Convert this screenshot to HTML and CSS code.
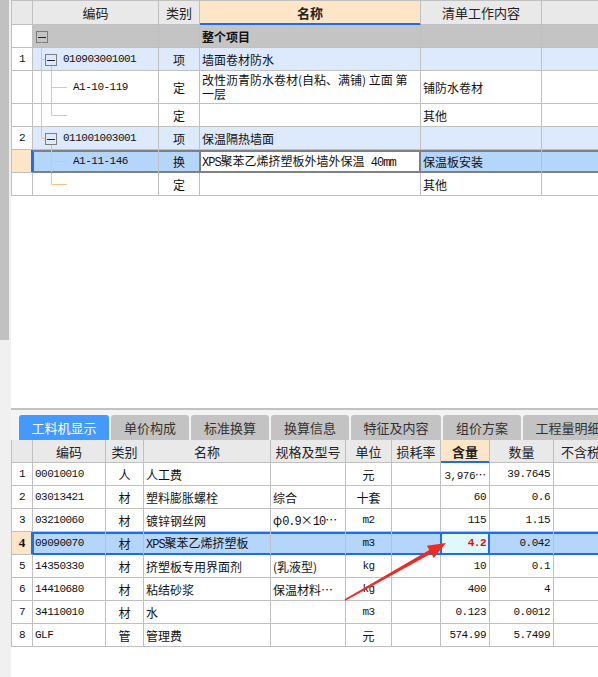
FILE: index.html
```html
<!DOCTYPE html>
<html lang="zh-CN">
<head>
<meta charset="utf-8">
<title>工料机显示</title>
<link rel="stylesheet" href="styles.css">
</head>
<body>
<div class="app">
  <div class="side"><div class="thumb"></div></div>
  <div class="main">
    <div class="top-pane">
      <div class="grid g-top">
        <div class="row head">
          <div class="c w-rn"></div>
          <div class="c w-code">编码</div>
          <div class="c w-type">类别</div>
          <div class="c w-name hl"><b>名称</b></div>
          <div class="c w-list">清单工作内容</div>
          <div class="c w-ext"></div>
        </div>
        <div class="row gray">
          <div class="c w-rn"></div>
          <div class="c w-code tc"><svg class="tree" width="40" height="22"><rect class="bx" x="3.5" y="6.5" width="11" height="11"/><path class="mn" d="M5 12.5H13"/><path class="ln" d="M8.5 17.5V23"/></svg></div>
          <div class="c w-type"></div>
          <div class="c w-name"><b>整个项目</b></div>
          <div class="c w-list"></div>
          <div class="c w-ext"></div>
        </div>
        <div class="row blue">
          <div class="c w-rn n ctr">1</div>
          <div class="c w-code tc"><svg class="tree" width="30" height="22"><path class="ln" d="M8.5 0V23M8.5 11.5H12M18.5 17.5V23"/><rect class="bx" x="12.5" y="6.5" width="11" height="11"/><path class="mn" d="M14 12.5H22"/></svg><span class="n">010903001001</span></div>
          <div class="c w-type ctr">项</div>
          <div class="c w-name">墙面卷材防水</div>
          <div class="c w-list"></div>
          <div class="c w-ext"></div>
        </div>
        <div class="row tall">
          <div class="c w-rn"></div>
          <div class="c w-code tc"><svg class="tree" width="40" height="32"><path class="ln" d="M8.5 0V33M18.5 0V33M18.5 16.5H34"/></svg><span class="n">A1-10-119</span></div>
          <div class="c w-type ctr">定</div>
          <div class="c w-name two"><span>改性沥青防水卷材(自粘、满铺) 立面 第<br>一层</span></div>
          <div class="c w-list">铺防水卷材</div>
          <div class="c w-ext"></div>
        </div>
        <div class="row">
          <div class="c w-rn"></div>
          <div class="c w-code tc"><svg class="tree" width="40" height="22"><path class="ln" d="M8.5 0V23M18.5 0V11.5H34"/></svg></div>
          <div class="c w-type ctr">定</div>
          <div class="c w-name"></div>
          <div class="c w-list">其他</div>
          <div class="c w-ext"></div>
        </div>
        <div class="row blue">
          <div class="c w-rn n ctr">2</div>
          <div class="c w-code tc"><svg class="tree" width="30" height="22"><path class="ln" d="M8.5 0V11.5H12M18.5 17.5V23"/><rect class="bx" x="12.5" y="6.5" width="11" height="11"/><path class="mn" d="M14 12.5H22"/></svg><span class="n">011001003001</span></div>
          <div class="c w-type ctr">项</div>
          <div class="c w-name">保温隔热墙面</div>
          <div class="c w-list"></div>
          <div class="c w-ext"></div>
        </div>
        <div class="row sel">
          <div class="c w-rn"></div>
          <div class="c w-code tc"><svg class="tree" width="40" height="22"><path class="ln" d="M18.5 0V23M18.5 11.5H34"/></svg><span class="n">A1-11-146</span></div>
          <div class="c w-type ctr">换</div>
          <div class="c w-name edit"><span><span class="ni">XPS</span>聚苯乙烯挤塑板外墙外保温<span class="ni"> 40mm</span></span></div>
          <div class="c w-list">保温板安装</div>
          <div class="c w-ext"></div>
        </div>
        <div class="row">
          <div class="c w-rn"></div>
          <div class="c w-code tc"><svg class="tree" width="40" height="22"><path class="ln" d="M18.5 0V11.5H34"/></svg></div>
          <div class="c w-type ctr">定</div>
          <div class="c w-name"></div>
          <div class="c w-list">其他</div>
          <div class="c w-ext"></div>
        </div>
      </div>
    </div>
    <div class="splitter"></div>
    <div class="bottom-pane">
      <div class="tabs">
        <div class="tab wide active">工料机显示</div>
        <div class="tab">单价构成</div>
        <div class="tab">标准换算</div>
        <div class="tab">换算信息</div>
        <div class="tab wide">特征及内容</div>
        <div class="tab">组价方案</div>
        <div class="tab wide">工程量明细</div>
      </div>
      <div class="grid g-bot">
        <div class="row head">
          <div class="c w-rn"></div>
          <div class="c w-bcode">编码</div>
          <div class="c w-btype">类别</div>
          <div class="c w-bname">名称</div>
          <div class="c w-spec">规格及型号</div>
          <div class="c w-unit">单位</div>
          <div class="c w-loss">损耗率</div>
          <div class="c w-qty hl"><b>含量</b></div>
          <div class="c w-amt">数量</div>
          <div class="c w-bext">不含税单价</div>
        </div>
        <div class="row">
          <div class="c w-rn n ctr">1</div>
          <div class="c w-bcode n">00010010</div>
          <div class="c w-btype ctr">人</div>
          <div class="c w-bname">人工费</div>
          <div class="c w-spec"></div>
          <div class="c w-unit ctr">元</div>
          <div class="c w-loss"></div>
          <div class="c w-qty n r"><span>3,976<span class="el">⋯</span></span></div>
          <div class="c w-amt n r">39.7645</div>
          <div class="c w-bext"></div>
        </div>
        <div class="row">
          <div class="c w-rn n ctr">2</div>
          <div class="c w-bcode n">03013421</div>
          <div class="c w-btype ctr">材</div>
          <div class="c w-bname">塑料膨胀螺栓</div>
          <div class="c w-spec">综合</div>
          <div class="c w-unit ctr">十套</div>
          <div class="c w-loss"></div>
          <div class="c w-qty n r">60</div>
          <div class="c w-amt n r">0.6</div>
          <div class="c w-bext"></div>
        </div>
        <div class="row">
          <div class="c w-rn n ctr">3</div>
          <div class="c w-bcode n">03210060</div>
          <div class="c w-btype ctr">材</div>
          <div class="c w-bname">镀锌钢丝网</div>
          <div class="c w-spec"><span>φ<span class="ni">0.9</span>×<span class="ni">10</span>⋯</span></div>
          <div class="c w-unit n ctr">m2</div>
          <div class="c w-loss"></div>
          <div class="c w-qty n r">115</div>
          <div class="c w-amt n r">1.15</div>
          <div class="c w-bext"></div>
        </div>
        <div class="row bsel">
          <div class="c w-rn ctr"><b class="bold4">4</b></div>
          <div class="c w-bcode n">09090070</div>
          <div class="c w-btype ctr">材</div>
          <div class="c w-bname"><span><span class="ni">XPS</span>聚苯乙烯挤塑板</span></div>
          <div class="c w-spec"></div>
          <div class="c w-unit n ctr">m3</div>
          <div class="c w-loss"></div>
          <div class="c w-qty n r cur"><b class="red">4.2</b></div>
          <div class="c w-amt n r">0.042</div>
          <div class="c w-bext"></div>
        </div>
        <div class="row">
          <div class="c w-rn n ctr">5</div>
          <div class="c w-bcode n">14350330</div>
          <div class="c w-btype ctr">材</div>
          <div class="c w-bname">挤塑板专用界面剂</div>
          <div class="c w-spec">(乳液型)</div>
          <div class="c w-unit n ctr">kg</div>
          <div class="c w-loss"></div>
          <div class="c w-qty n r">10</div>
          <div class="c w-amt n r">0.1</div>
          <div class="c w-bext"></div>
        </div>
        <div class="row">
          <div class="c w-rn n ctr">6</div>
          <div class="c w-bcode n">14410680</div>
          <div class="c w-btype ctr">材</div>
          <div class="c w-bname">粘结砂浆</div>
          <div class="c w-spec">保温材料⋯</div>
          <div class="c w-unit n ctr">kg</div>
          <div class="c w-loss"></div>
          <div class="c w-qty n r">400</div>
          <div class="c w-amt n r">4</div>
          <div class="c w-bext"></div>
        </div>
        <div class="row">
          <div class="c w-rn n ctr">7</div>
          <div class="c w-bcode n">34110010</div>
          <div class="c w-btype ctr">材</div>
          <div class="c w-bname">水</div>
          <div class="c w-spec"></div>
          <div class="c w-unit n ctr">m3</div>
          <div class="c w-loss"></div>
          <div class="c w-qty n r">0.123</div>
          <div class="c w-amt n r">0.0012</div>
          <div class="c w-bext"></div>
        </div>
        <div class="row">
          <div class="c w-rn n ctr">8</div>
          <div class="c w-bcode n">GLF</div>
          <div class="c w-btype ctr">管</div>
          <div class="c w-bname">管理费</div>
          <div class="c w-spec"></div>
          <div class="c w-unit ctr">元</div>
          <div class="c w-loss"></div>
          <div class="c w-qty n r">574.99</div>
          <div class="c w-amt n r">5.7499</div>
          <div class="c w-bext"></div>
        </div>
      </div>
    </div>
  </div>
</div>
<svg class="arrow" width="598" height="677" viewBox="0 0 598 677">
  <polygon points="344.6,599.3 429.3,550.1 426.9,545.7 446,543 433.7,557.9 431.3,553.5 345.4,600.7" fill="#ec2b25"/>
</svg>
</body>
</html>
```

FILE: styles.css
```css
html, body {
  margin: 0;
  padding: 0;
}
body {
  position: relative;
  width: 598px;
  height: 677px;
  overflow: hidden;
  background: #f0f0f0;
  font-family: "Noto Sans CJK SC", sans-serif;
}
.app {
  display: flex;
  width: 598px;
  height: 677px;
}
.side {
  flex: none;
  width: 11px;
  background: #f0f0f0;
}
.thumb {
  width: 9px;
  height: 340px;
  background: #c1c1c1;
}
.main {
  flex: 1;
  min-width: 0;
  display: flex;
  flex-direction: column;
  background: #fff;
  overflow: hidden;
}
.top-pane {
  flex: none;
  height: 408px;
  overflow: hidden;
  background: #fff;
}
.splitter {
  flex: none;
  height: 2px;
  background: #c2c2c2;
}
.bottom-pane {
  flex: 1;
  background: #fff;
  overflow: hidden;
}
.tabs {
  display: flex;
  gap: 2px;
  height: 30px;
  box-sizing: border-box;
  padding: 5px 0 0 8px;
  background: #f3f3f3;
  white-space: nowrap;
}
.tab {
  flex: none;
  width: 78px;
  height: 25px;
  display: flex;
  align-items: center;
  justify-content: center;
  background: #c3c3c3;
  color: #333;
  font-size: 13px;
  border-radius: 3px 3px 0 0;
}
.tab.wide { width: 90px; }
.tab.active {
  background: #4499ff;
  color: #fff;
}

/* grids */
.grid {
  width: max-content;
  border-left: 1px solid #c0c0c0;
}
.g-top { border-top: 1px solid #c0c0c0; }
.row {
  display: flex;
  height: 23px;
}
.row.tall { height: 33px; }
.c {
  flex: none;
  box-sizing: border-box;
  height: 100%;
  display: flex;
  align-items: center;
  padding: 0 2px;
  border-right: 1px solid #c0c0c0;
  border-bottom: 1px solid #c0c0c0;
  overflow: hidden;
  white-space: nowrap;
  font-family: "Noto Sans CJK SC", sans-serif;
  font-size: 12px;
  color: #111;
}
.n {
  font-family: "Liberation Mono", monospace;
  font-size: 11px;
  letter-spacing: -0.5px;
}
.ni {
  font-family: "Liberation Mono", monospace;
  font-size: 12px;
  letter-spacing: -1px;
}
.el {
  font-family: "Noto Sans CJK SC", sans-serif;
  font-size: 11px;
  letter-spacing: 0;
}
.ctr { justify-content: center; }
.r { justify-content: flex-end; padding-right: 3px; }
.tc { padding: 0; }
.two { line-height: 14px; }

.g-top .w-rn { background: #fff; }
.head { height: 24px; }
.g-bot .head { height: 23px; }
.row.head .c {
  background: #e9e9e9;
  justify-content: center;
  font-size: 13px;
  color: #222;
}
.row.head .c.hl {
  background: #fde5c8;
  border-bottom-color: #1b6ef3;
  box-shadow: inset 0 -1px #1b6ef3;
}

/* column widths */
.w-rn { width: 21px; }
.w-code { width: 126px; }
.w-type { width: 41px; }
.w-name { width: 221px; }
.w-list { width: 121px; }
.w-ext { width: 120px; }
.w-bcode { width: 73px; }
.w-btype { width: 38px; }
.w-bname { width: 127px; }
.w-spec { width: 75px; }
.w-unit { width: 46px; }
.w-loss { width: 49px; }
.w-qty { width: 49px; }
.w-amt { width: 64px; }
.w-bext { width: 80px; }

/* row states */
.gray { background: #c4c4c4; }
.blue { background: #dde9fc; }

.tree {
  flex: none;
  overflow: visible;
}
.tree .ln { stroke: #f8c27e; stroke-width: 1; fill: none; }
.tree .bx { stroke: #7d7d7d; stroke-width: 1; fill: none; }
.tree .mn { stroke: #222; stroke-width: 1; fill: none; }

.sel { background: #b4d5fc; }
.sel .c { border-bottom-color: #808080; box-shadow: inset 0 2px #808080, inset 0 -1px #808080; }
.sel .w-rn {
  background: #fde6c8;
  border-bottom-color: #c0c0c0;
  border-right-color: #1b6ef3;
  box-shadow: inset -1px 0 #1b6ef3;
}
.sel .w-code { box-shadow: inset 0 2px #808080, inset 0 -1px #808080, inset 1px 0 #1b6ef3; }
.sel .w-type { border-right-color: #808080; }
.sel .edit {
  background: #fff;
  border-right-color: #808080;
  box-shadow: inset 0 2px #808080, inset 0 -1px #808080, inset 1px 0 #808080, inset -1px 0 #808080;
}

.bsel { background: #b4d5fc; }
.bsel .c { border-bottom-color: #1b6ef3; box-shadow: inset 0 2px #1b6ef3, inset 0 -1px #1b6ef3; }
.bsel .w-rn {
  background: #fde6c8;
  border-bottom-color: #c0c0c0;
  border-right-color: #1b6ef3;
  box-shadow: inset -1px 0 #1b6ef3;
}
.bsel .w-bcode { box-shadow: inset 0 2px #1b6ef3, inset 0 -1px #1b6ef3, inset 1px 0 #1b6ef3; }
.bsel .w-loss { border-right-color: #1b6ef3; }
.bsel .cur {
  background: #e0f8f8;
  border-right-color: #1b6ef3;
  box-shadow: inset 0 2px #1b6ef3, inset 0 -1px #1b6ef3, inset 1px 0 #1b6ef3, inset -1px 0 #1b6ef3;
}
.bold4 {
  font-family: "Liberation Serif", serif;
  font-size: 13px;
  font-weight: bold;
  color: #111;
}
.red {
  color: #ff0000;
  font-weight: bold;
}

.arrow {
  position: absolute;
  left: 0;
  top: 0;
  pointer-events: none;
}
```
